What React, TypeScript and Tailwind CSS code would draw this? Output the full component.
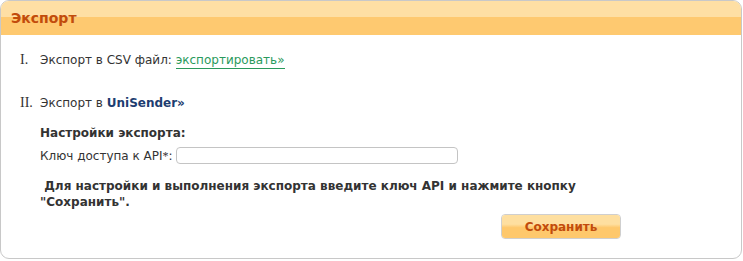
import React from "react";

const App: React.FC = () => {
  return (
    <div className="h-[261px] w-[743px] bg-white p-0 font-['DejaVu_Sans',sans-serif] text-[12px] leading-[16px] text-[#333]">
      <div className="h-[259px] w-[742px] overflow-hidden rounded-[9px] border border-[#c8c8c8] bg-white">
        {/* header */}
        <div className="flex h-[34px] flex-col">
          <div className="h-[16px] bg-[#fedfa4]" />
          <div className="h-[18px] bg-[#fec970]" />
        </div>
        <div className="-mt-[34px] flex h-[34px] items-center pl-[10px] text-[14px] font-bold text-[#c24c0c]">
          Экспорт
        </div>

        {/* rows */}
        <div className="pl-[19px]">
          <div className="mt-[17px] flex h-[16px] items-baseline">
            <span className="w-[20px] font-['Liberation_Serif',serif] text-[14px] leading-[16px] text-[#333]">I.</span>
            <span>Экспорт в CSV файл:&nbsp;</span>
            <a href="#" className="border-b border-[#2a9a5c] text-[#2a9a5c]">
              экспортировать»
            </a>
          </div>

          <div className="mt-[27px] flex h-[16px] items-baseline">
            <span className="w-[20px] font-['Liberation_Serif',serif] text-[14px] leading-[16px] text-[#333]">II.</span>
            <span>Экспорт в&nbsp;</span>
            <a href="#" className="font-bold text-[#1d3d70]">
              UniSender»
            </a>
          </div>

          <div className="pl-[20px]">
            <div className="mt-[14px] font-bold">Настройки экспорта:</div>
            <div className="mt-[6px] flex h-[17px] items-center">
              <span>Ключ доступа к API</span>
              <span className="font-['Liberation_Serif',serif]">*</span>
              <span>:&nbsp;</span>
              <input
                type="text"
                className="h-[17px] w-[282px] rounded-[4px] border border-[#c4c4c4] bg-white"
              />
            </div>
            <p className="mt-[14px] font-bold">
              &nbsp;Для настройки и выполнения экспорта введите ключ API и нажмите кнопку
              <br />
              "Сохранить".
            </p>
            <div className="mt-[4px] flex pl-[461px]">
              <button className="flex h-[25px] w-[120px] flex-col overflow-hidden rounded-[4px] border border-[#cfcfcf] p-0">
                <span className="flex h-full w-full items-center justify-center bg-[linear-gradient(#fedfa0_0%,#fedfa0_40%,#fec86c_55%,#fec86c_100%)] font-bold text-[#c24c0c]">
                  Сохранить
                </span>
              </button>
            </div>
          </div>
        </div>
      </div>
    </div>
  );
};

export default App;
